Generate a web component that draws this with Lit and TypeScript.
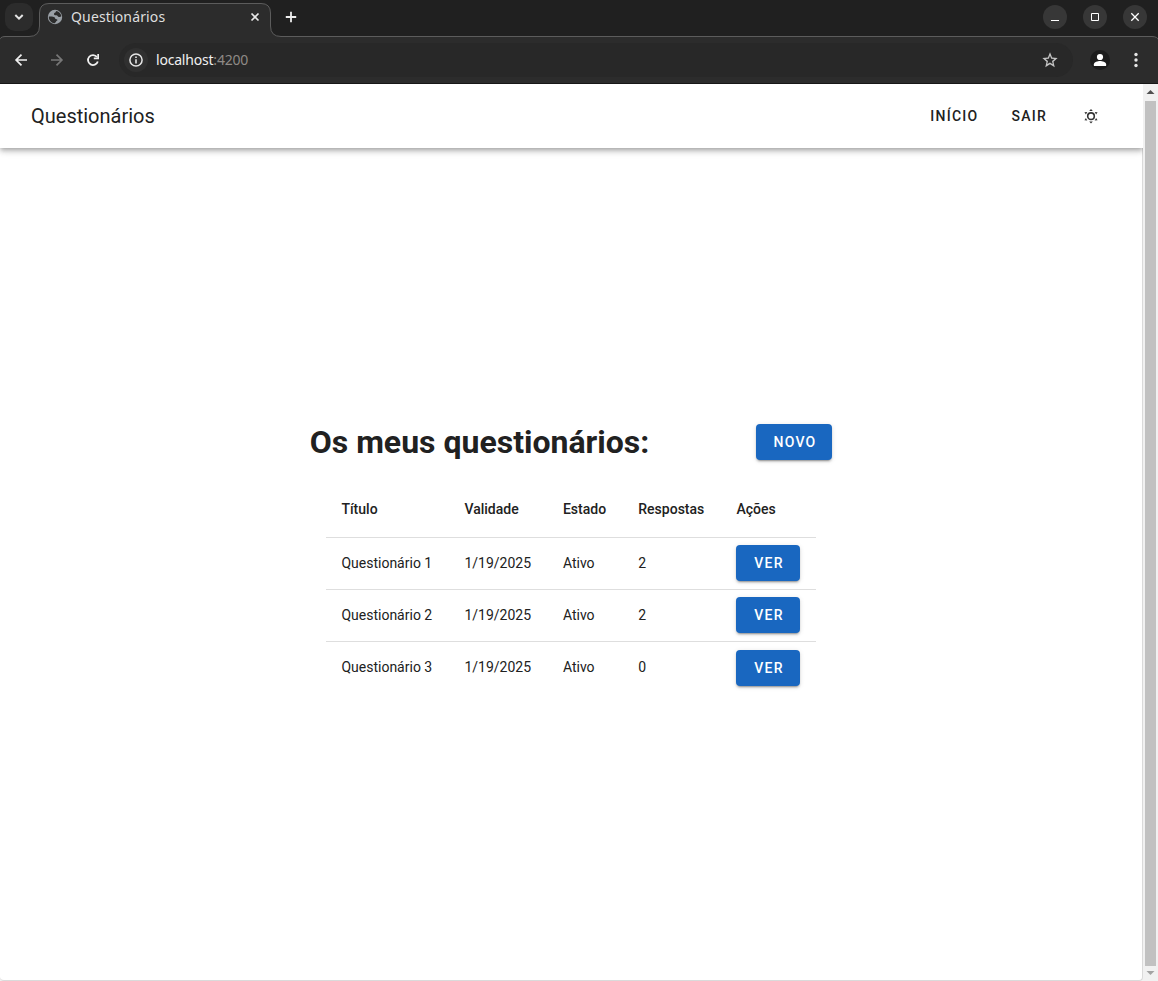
import { LitElement, html, css } from "lit";
import { customElement } from "lit/decorators.js";

@customElement("browser-chrome")
class BrowserChrome extends LitElement {
  static styles = css`
    :host { display: block; position: relative; height: 84px; background: #202020; color: #dedede; font-family: "Noto Sans", sans-serif; overflow: hidden; }
    .outline { position: absolute; left: 0; top: 0; width: 1158px; height: 84px; }
    .strip { position: relative; display: flex; align-items: center; padding: 0 11px 3px 5px; box-sizing: border-box; height: 37px; }
    .drop { width: 28px; height: 28px; border-radius: 10px; background: #2c2c2c; }
    svg { display: block; }
    .tab { display: flex; align-items: center; width: 232px; margin-left: 6px; height: 32px; box-sizing: border-box; padding: 0 10px 0 8px; }
    .name { font-size: 14px; line-height: 20px; margin-left: 8px; flex: 1; letter-spacing: 0.15px; white-space: nowrap; }
    .plus { margin-left: 13px; }
    .win { display: flex; gap: 16px; margin-left: auto; }
    .bar { position: relative; display: flex; align-items: center; height: 46px; padding-left: 13px; box-sizing: border-box; }
    .nav { display: flex; gap: 20px; }
    .omni { display: flex; align-items: center; width: 954px; height: 34px; border-radius: 17px; background: #282828; margin-left: 18px; padding: 0 15px 0 4px; box-sizing: border-box; }
    .url { flex: 1; font-size: 14px; line-height: 20px; margin-left: 7px; color: #f0f0f0; letter-spacing: -0.2px; white-space: nowrap; }
    .port { color: #8f8a86; }
    .person { margin-left: 17px; }
    .dots { margin-left: 18px; }
  `;
  render() {
    return html`
      <svg class="outline" viewBox="0 0 1158 84">
        <path fill="#2c2c2c" stroke="#5c5c5c" d="M-1 85V41Q0 36.5 5 36.5H29Q39.5 36.5 39.5 26V13Q39.5 3.5 49 3.5H261Q270.5 3.5 270.5 13V26Q270.5 36.5 281 36.5H1152Q1158 36.5 1159 41V85Z"/>
        <path stroke="#171717" d="M0 83.5H1158"/>
      </svg>
      <div class="strip">
        <svg class="drop" viewBox="0 0 28 28" fill="none" stroke="#e4e4e4" stroke-width="2"><path d="m10.300 12 3.700 3.700 3.700-3.700"/></svg>
        <div class="tab">
          <svg width="16" height="16" viewBox="0 0 16 16"><circle cx="8" cy="8" r="7.200" fill="#9aa0a6"/><path fill="#2c2c2c" d="M9 2c2.900.3 5 2.500 5.300 5.200-.7 1-2.400 1.100-3.300.3-.5-.5-.6-1.100-1.500-1.200-.9 0-1.800.1-2.300-.5-.5-.8 0-1.600.6-2 .7-.4 1.100-.7 1.200-1.800ZM1.800 7.500c2.400-.3 4.900 0 5.700.8.700.700.5 1.400 1.200 1.800.7.400 1.700.2 1.700 1 0 .8-.9.800-1.300 1.400-.4.600-.9.900-1 1.700C4.700 14.500 1.700 11.500 1.800 7.500Z"/></svg>
          <span class="name">Questionários</span>
          <svg width="12" height="12" viewBox="0 0 12 12" fill="none" stroke="#e8e8e8" stroke-width="1.700"><path d="m2.500 2.500 7 7m0-7-7 7"/></svg>
        </div>
        <svg class="plus" width="14" height="14" viewBox="0 0 14 14" fill="none" stroke="#ededed" stroke-width="1.800"><path d="M7 1.800v10.400M1.800 7h10.400"/></svg>
        <div class="win">
          <svg width="24" height="24" viewBox="0 0 24 24"><circle cx="12" cy="12" r="12" fill="#373737"/><path fill="#fff" d="M8 15h8v1H8z"/></svg>
          <svg width="24" height="24" viewBox="0 0 24 24"><circle cx="12" cy="12" r="12" fill="#373737"/><path fill="none" stroke="#fff" d="M8.500 8.500h7v7h-7z"/></svg>
          <svg width="24" height="24" viewBox="0 0 24 24"><circle cx="12" cy="12" r="12" fill="#373737"/><path fill="none" stroke="#fff" stroke-width="1.300" d="m8.300 8.300 7.400 7.400m0-7.400-7.400 7.400"/></svg>
        </div>
      </div>
      <div class="bar">
        <div class="nav">
          <svg width="16" height="16" viewBox="0 0 16 16" fill="none" stroke="#f0f0f0" stroke-width="1.700"><path d="M14 8H3m5.500-5.400L3.100 8l5.400 5.400"/></svg>
          <svg width="16" height="16" viewBox="0 0 16 16" fill="none" stroke="#777" stroke-width="1.700"><path d="M2 8h11M7.500 2.600 12.900 8l-5.400 5.400"/></svg>
          <svg width="16" height="16" viewBox="0 0 16 16" fill="none" stroke="#f0f0f0" stroke-width="1.800"><path d="M12.800 9.500A5 5 0 1 1 12 5"/><path fill="#f0f0f0" stroke="none" d="M14 1.900V7.200H8.800V5.600h3.500V1.900z"/></svg>
        </div>
        <div class="omni">
          <svg width="26" height="26" viewBox="0 0 26 26"><circle cx="13" cy="13" r="12" fill="#303030"/><circle cx="13" cy="13" r="6.100" fill="none" stroke="#e6e6e6" stroke-width="1.500"/><path fill="#e6e6e6" d="M12.200 12.200h1.600v4.200h-1.600zM12.200 9.500h1.600v1.600h-1.600z"/></svg>
          <span class="url">localhost<span class="port">:4200</span></span>
          <svg width="16" height="16" viewBox="1 1 22 22" fill="#c4c4c4"><path d="M22.500 9.240l-7.600-.66L12 1.500 9.100 8.590 1.500 9.240l5.730 5L5.500 22 12 17.770 18.500 22l-1.720-7.760 5.720-5zM12 15.400l-3.760 2.270 1-4.280-3.320-2.880 4.380-.38L12 6.100l1.710 4.040 4.380.38-3.320 2.880 1 4.280L12 15.400z"/></svg>
        </div>
        <svg class="person" width="20" height="20" viewBox="0 0 20 20"><circle cx="10" cy="10" r="10" fill="#1c1c1c"/><circle cx="10" cy="7" r="3.100" fill="#fff"/><path fill="#fff" d="M3.900 16v-1.700c0-2.100 4-3.200 6.100-3.200s6.100 1.100 6.100 3.200V16z"/></svg>
        <svg class="dots" width="16" height="16" viewBox="0 0 16 16" fill="#e6e6e6"><circle cx="8" cy="2.500" r="1.700"/><circle cx="8" cy="8" r="1.700"/><circle cx="8" cy="13.500" r="1.700"/></svg>
      </div>`;
  }
}

@customElement("app-root")
class AppRoot extends LitElement {
  static styles = css`
    :host { display: flex; flex-direction: column; height: 981px; background: #fff; color: #212121; font-family: Roboto, sans-serif; overflow: hidden; }
    browser-chrome { flex: none; }
    .view { display: grid; grid-template-columns: 1143px 15px; flex: 1; min-height: 0; background: #f1f1f1; }
    .page { display: flex; flex-direction: column; background: #f1f1f1; }
    header { display: flex; align-items: center; height: 64px; box-sizing: border-box; padding: 0 44px 0 31px; background: #fff; position: relative; box-shadow: 0 2px 4px -1px rgba(0,0,0,.2), 0 4px 5px rgba(0,0,0,.14), 0 1px 10px rgba(0,0,0,.12); clip-path: inset(0 0 -20px 0); }
    .brand { font-size: 20px; line-height: 32px; flex: 1; }
    .link { font-size: 14px; font-weight: 500; letter-spacing: 1.250px; margin-right: 32px; }
    .link + .link { margin: 0 31px 0 1px; }
    .sun { display: block; margin: 0 0 0 5px; }
    main { flex: 1; background: #fff; border: solid #dadada; border-width: 0 1px 1px 0; border-radius: 0 0 4px 4px; padding: 272px 0 0 309.700px; }
    .heading { display: flex; justify-content: space-between; align-items: center; width: 522.300px; height: 44px; }
    h1 { margin: 0; font-size: 32px; font-weight: 700; line-height: 44px; white-space: nowrap; }
    .btn { display: flex; align-items: center; justify-content: center; box-sizing: border-box; border: 0; height: 36px; width: 64px; padding: 0 0 0 2px; border-radius: 4px; background: #1967c0; color: #fff; font: 500 14px/36px Roboto, sans-serif; letter-spacing: 1.250px; box-shadow: 0 3px 1px -2px rgba(0,0,0,.2), 0 2px 2px rgba(0,0,0,.14), 0 1px 5px rgba(0,0,0,.12); }
    .new { width: 76px; }
    .table { width: 490px; margin: 18px 0 0 16.300px; font-size: 14px; line-height: 20px; }
    .row { display: grid; grid-template-columns: 123px 98.500px 75.400px 98.100px 95px; align-items: center; height: 52px; box-sizing: border-box; padding-bottom: 1px; border-bottom: 1px solid #dedede; }
    .row > * { margin-left: 15.450px; }
    .row > .btn { margin-left: 15px; }
    .head { height: 56px; font-weight: 500; }
    .row:last-child { border-color: transparent; }
    .row:last-child > .btn { margin-top: 2px; }
    .scroll { display: flex; flex-direction: column; align-items: center; background: #f1f1f1; }
    .thumb { width: 11px; flex: 1; background: #c1c1c1; }
  `;
  private rows = [
    ["Questionário 1", "1/19/2025", "Ativo", "2"],
    ["Questionário 2", "1/19/2025", "Ativo", "2"],
    ["Questionário 3", "1/19/2025", "Ativo", "0"],
  ];
  render() {
    return html`
      <browser-chrome></browser-chrome>
      <div class="view">
        <div class="page">
          <header>
            <span class="brand">Questionários</span>
            <span class="link">INÍCIO</span>
            <span class="link">SAIR</span>
            <svg class="sun" width="16" height="16" viewBox="0 0 16 16"><circle cx="8" cy="8.200" r="3.300" fill="none" stroke="#333" stroke-width="1.600"/><g fill="#383838"><path d="m8 1 1.800 2H6.200zM8 15.400l1.800-2H6.200z"/><path d="m1.400 4.200 2.900-.3-1.400 2.500zM14.600 4.200l-2.900-.3 1.400 2.500zM1.400 12.200l2.900.3-1.400-2.500zM14.600 12.200l-2.900.3 1.400-2.500z"/></g></svg>
          </header>
          <main>
            <div class="heading"><h1>Os meus questionários:</h1><button class="btn new">NOVO</button></div>
            <div class="table">
              <div class="row head"><span>Título</span><span>Validade</span><span>Estado</span><span>Respostas</span><span>Ações</span></div>
              ${this.rows.map((r) => html`<div class="row">${r.map((c) => html`<span>${c}</span>`)}<button class="btn">VER</button></div>`)}
            </div>
          </main>
        </div>
        <div class="scroll">
          <svg width="15" height="17" viewBox="0 0 15 17"><path fill="#505050" d="m3.500 10 4-4 4 4z"/></svg>
          <div class="thumb"></div>
          <svg width="15" height="15" viewBox="0 0 15 15"><path fill="#a3a3a3" d="m3.500 5 4 4 4-4z"/></svg>
        </div>
      </div>`;
  }
}
